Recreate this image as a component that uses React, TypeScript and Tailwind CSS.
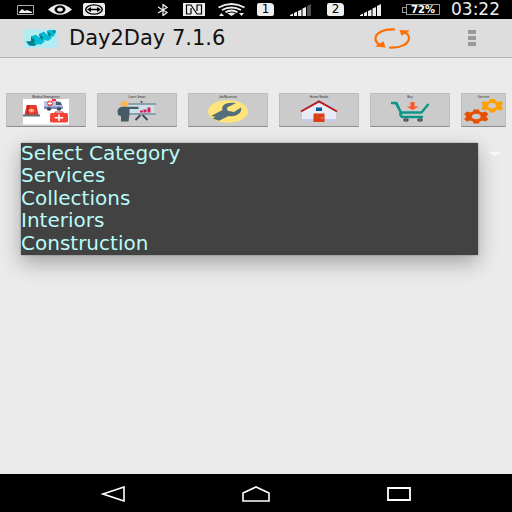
import type { ReactNode } from 'react';
import { clsx } from 'clsx';

const categories = ['Select Category', 'Services', 'Collections', 'Interiors', 'Construction'];

interface TileProps {
  label: string;
  children: ReactNode;
}

function Tile({ label, children }: TileProps) {
  return (
    <button
      type="button"
      className="flex h-[34px] min-w-0 flex-col items-center overflow-hidden border border-[#bdbdbd] border-b-[#8c8c8c] bg-[#cbcbcb] pt-[2px]"
    >
      <span className="h-[3px] text-[3px] leading-[3px] whitespace-nowrap text-[#222]">{label}</span>
      {children}
    </button>
  );
}

function EmergencyIcon() {
  return (
    <svg width="46" height="27" viewBox="0 0 46 27" className="shrink-0" aria-hidden="true">
      <path d="M0 0h46v25.500H0z" fill="#fff" />
      <path d="M3.500 6h10l2 10h-14z" fill="#e83a2c" />
      <path d="M4.500 6h2l-1 10h-2z" fill="#b92722" />
      <ellipse cx="8.500" cy="11.500" rx="3" ry="2" fill="#ff8a65" />
      <circle cx="8.500" cy="11.500" r="1" fill="#ffe0b2" />
      <path d="M0 15.500h17v2H0z" fill="#607078" />
      <path d="M21 2h13l5 3 1 4v1H21z" fill="#bcc5e8" />
      <path d="M33 2.500l4.500.5 1.500 3h-6z" fill="#455a74" />
      <path d="M21 7.500h19V10H21z" fill="#7d88bd" />
      <path d="M29 0h4v2h-4z" fill="#f33" />
      <circle cx="27" cy="4.300" r="2.800" fill="#f44336" />
      <path d="M26.400 2.500h1.200v1.200h1.500v1.200h-1.500v1.200h-1.200V4.900h-1.500V3.700h1.500z" fill="#fff" />
      <ellipse cx="26" cy="10" rx="2.200" ry="1.700" fill="#37474f" />
      <ellipse cx="36" cy="10" rx="2.200" ry="1.700" fill="#37474f" />
      <path d="M32 14.500V13h8v1.500" fill="none" stroke="#d32f2f" />
      <rect x="27" y="14" width="18" height="9.500" rx="1.500" fill="#f44336" />
      <path d="M35.200 15.500h1.600V18h3.400v1.500h-3.400V22h-1.600v-2.500h-3.400V18h3.400z" fill="#fff" />
    </svg>
  );
}

function LearnIcon() {
  return (
    <svg width="40" height="21" viewBox="0 0 40 21" className="mt-[2px] shrink-0" aria-hidden="true">
      <path d="M10 3h27v10H10z" fill="#cfdfe8" />
      <path d="M10 2h29v2H10zM12 12h27v2H12z" fill="#8ba1ae" />
      <circle cx="24.500" cy="1" r="1" fill="#37474f" />
      <path d="M23.500 14l-5 5M25.500 14l5 5" stroke="#37474f" strokeWidth="1.800" />
      <path d="M23 9.500h3v2h-3zM26.500 8.500h3v3h-3zM30.500 6.500h3v5h-3z" fill="#d81b60" />
      <ellipse cx="7.500" cy="3" rx="4" ry="2.700" fill="#ffb74d" />
      <path d="M5 5.700h16.500v2.200H12.500V13l-1 7.500H4V15L1 14l-.5-4Q1 6.500 5 5.700z" fill="#455a64" />
    </svg>
  );
}

function WrenchIcon() {
  return (
    <svg width="40" height="23" viewBox="0 0 40 23" className="mt-[1px] shrink-0" aria-hidden="true">
      <ellipse cx="20" cy="11.500" rx="20" ry="11.300" fill="#ffe47a" />
      <path
        d="M28 3C19 1.500 12.500 5 14.500 10L3 16l4.500.7-3 1.800 6.500 2.300L20.500 16C29 17.200 34.500 12.500 33 7.500L26 12l-6.500-1.300-.5-3.200z"
        fill="#546e7a"
      />
    </svg>
  );
}

function HouseIcon() {
  return (
    <svg width="38" height="23" viewBox="0 0 38 23" className="mt-[1px] shrink-0" aria-hidden="true">
      <path d="M29 3h4v7h-4z" fill="#c5cae9" />
      <path d="M2 11L19 2l17 9v9H2z" fill="#e8eaf6" />
      <path d="M2 19h34v2.500H2z" fill="#c5cae9" />
      <path d="M1 11.500L19 1.500l18 10" fill="none" stroke="#b7191c" strokeWidth="2" />
      <path d="M16 7.500h6v3.500h-6z" fill="#01579b" />
      <path d="M13.500 13.500h11V22h-11z" fill="#db3f14" />
      <circle cx="22" cy="18" r=".8" fill="#ffab91" />
    </svg>
  );
}

function CartIcon() {
  return (
    <svg width="39" height="21" viewBox="0 0 39 21" className="mt-[2px] shrink-0" aria-hidden="true">
      <path d="M19.500 1h4v4.500h4.500L21.500 9 15.500 5.500h4z" fill="#ff5722" />
      <path
        d="M0 2h5.500l4.500 9.500M10 11.500h20.500L37.500 3M9 11.500q.5 4.500 3 4.500h20"
        fill="none"
        stroke="#0b9688"
        strokeWidth="2.300"
        strokeLinejoin="round"
      />
      <path d="M3.500 2h3l5 12-2-1z" fill="#0b9688" />
      <ellipse cx="15" cy="19" rx="2.800" ry="1.800" fill="#37474f" />
      <ellipse cx="29" cy="19" rx="2.800" ry="1.800" fill="#37474f" />
      <circle cx="15" cy="19" r=".7" fill="#b0bec5" />
      <circle cx="29" cy="19" r=".7" fill="#b0bec5" />
    </svg>
  );
}

function GearShape({ className }: { className: string }) {
  return (
    <path
      className={className}
      fillRule="evenodd"
      d="M9 0h6l.6 2.200 3 1L22 2.200l3 2.800-2 1.600v1.800l2 1.600-3 2.800-3.400-1-3 1L15 15H9l-.6-2.200-3-1-3.400 1L-1 10l2-1.600V6.600L-1 5l3-2.800 3.400 1 3-1zM12 4.500a4.800 3 0 1 0 .01 0z"
    />
  );
}

function GearsIcon() {
  return (
    <svg width="40" height="25" viewBox="0 0 40 25" className="shrink-0" aria-hidden="true">
      <g transform="translate(18 0) scale(.85 .9)">
        <GearShape className="fill-[#ffa000]" />
      </g>
      <g transform="translate(1 10.500) scale(.94 .94)">
        <GearShape className="fill-[#e65100]" />
      </g>
    </svg>
  );
}

function SimIcon({ slot }: { slot: string }) {
  return (
    <span className="flex h-[13px] w-[17px] items-center justify-center rounded-[2px] rounded-tr-[4px] bg-[#eee] font-['DejaVu_Sans'] text-[12px] leading-[13px] text-black">
      {slot}
    </span>
  );
}

function SignalIcon({ full }: { full?: boolean }) {
  return (
    <svg width="21" height="12" viewBox="0 0 21 12" aria-hidden="true">
      <path d="M0 12v-1l3-1.500V12zM4 12V9l3-1.500V12zM8 12V7l3.500-1.500V12zM12.500 12V4.500L16 3v9z" fill="#eee" />
      <path d="M17 12V2l4-2v12z" className={clsx(full ? 'fill-[#eee]' : 'fill-[#505050]')} />
    </svg>
  );
}

function StatusBar() {
  return (
    <div className="flex h-[19px] items-center bg-black pr-[12px] pl-[17px] text-[#eee]">
      <svg width="17" height="10" viewBox="0 0 17 10" aria-hidden="true">
        <path d="M.5.5h16v9H.5z" fill="none" stroke="#aaa" />
        <path d="M2 8V7l3-3 3 2 2-1 5 2v1z" fill="#eee" />
      </svg>
      <svg width="24" height="11" viewBox="0 0 24 11" className="ml-[14px]" aria-hidden="true">
        <path d="M0 5.500Q12-5 24 5.500 12 16 0 5.500z" fill="#eee" />
        <ellipse cx="12" cy="5.500" rx="5.500" ry="4" fill="#000" />
        <ellipse cx="12" cy="5.500" rx="2.800" ry="2" fill="#eee" />
      </svg>
      <svg width="22" height="13" viewBox="0 0 22 13" className="ml-[11px]" aria-hidden="true">
        <rect width="22" height="13" rx="2" fill="#eee" />
        <ellipse cx="11" cy="6.500" rx="9" ry="5.200" fill="#000" />
        <ellipse cx="11" cy="6.500" rx="7.500" ry="4" fill="#eee" />
        <path d="M4 6.500l4-2.500v1.700h6V4l4 2.500L14 9V7.300H8V9z" fill="#000" />
      </svg>
      <div className="ml-auto flex items-center">
        <svg width="12" height="12" viewBox="0 0 12 12" aria-hidden="true">
          <path d="M1 3l9 5.500L6 11.500V.5l4 3L1 9" fill="none" stroke="#eee" strokeWidth="1.300" />
        </svg>
        <svg width="22" height="13" viewBox="0 0 22 13" className="ml-[14px]" aria-hidden="true">
          <path d="M0 0h22v13H0z" fill="#eee" />
          <path d="M8 11H3.500V2H8l6 9h4.500V2H14v6M8 11V5" fill="none" stroke="#000" strokeWidth="1.200" />
        </svg>
        <svg width="27" height="13" viewBox="0 0 27 13" className="ml-[13px]" aria-hidden="true">
          <g fill="none" stroke="#eee" strokeWidth="1.900">
            <path d="M.5 4.500q13-7 26 0" />
            <path d="M4 7q9.500-5 19 0" />
            <path d="M7.500 9.300q6-3.600 12 0" />
          </g>
          <path d="M9.500 10.500q4-2 8 0L13.500 13zM1 13l2.500-3L6 13zM21 10h5l-2.500 3z" fill="#eee" />
        </svg>
        <div className="ml-[12px] flex items-center gap-[16px]">
          <SimIcon slot="1" />
          <SignalIcon />
          <SimIcon slot="2" />
          <SignalIcon full />
        </div>
        <div className="ml-[21px] flex items-center">
          <span className="h-[6px] w-[4px] border border-r-0 border-[#999]" />
          <span className="flex h-[11px] w-[34px] items-center justify-center border border-[#999] font-['DejaVu_Sans'] text-[10px] leading-[11px] font-bold text-white">
            72%
          </span>
        </div>
        <span className="ml-[11px] font-['DejaVu_Sans'] text-[17px] leading-[19px]">03:22</span>
      </div>
    </div>
  );
}

function AppHeader() {
  return (
    <header className="flex h-[39px] items-center border-b border-[#b5b5b5] bg-[#ddd] pr-[36px] pl-[24px]">
      <svg width="34" height="19" viewBox="0 0 34 19" aria-hidden="true">
        <path d="M0 0h34v19H0z" fill="#b2ebf2" />
        <path d="M2 12.500l6-.5 5 3.500-3 1.500-5-.5zM7 7.500L12 6l2 5-4 1zM15 5l5-2 3 5-4 1zM23 2l5-1 1 4-3 1z" fill="#00838f" />
        <path d="M12 6l9 6-4 3.500-7-.5-3-7.500zM20 3l8 6-4 3-7-2-2-5zM28 1l3 1.500-1 5-5 .5-2-6z" fill="#00bcd4" />
        <path d="M7 7.500l4 3.500-1 4-3-3zM15 5l4 3v3l-3-2zM23 2l4 3-1 3-2-2zM28 1l4 .5-1 4z" fill="#00838f" />
      </svg>
      <h1 className="ml-[11px] font-['DejaVu_Sans'] text-[21px] leading-[24px] text-[#111]">Day2Day 7.1.6</h1>
      <button type="button" aria-label="Refresh" className="ml-auto">
        <svg width="37" height="21" viewBox="0 0 37 21" aria-hidden="true">
          <g fill="none" stroke="#ff6f00" strokeWidth="2.200">
            <path d="M21 1.500C10 .5 1.500 5 1.500 10.500q0 4 4.500 6.500" />
            <path d="M15 19.500c11 1 20-3.500 20-9.500q0-3.500-4.500-6" />
          </g>
          <path d="M1 18.500l8.500-5.300 2 6.300zM25.500 2L36 2.500l-8.500 5.300z" fill="#ff6f00" />
        </svg>
      </button>
      <button type="button" aria-label="More options" className="ml-[57px] flex flex-col gap-[2px]">
        <span className="h-[4px] w-[8px] bg-[#999]" />
        <span className="h-[4px] w-[8px] bg-[#999]" />
        <span className="h-[4px] w-[8px] bg-[#999]" />
      </button>
    </header>
  );
}

function CategoryList() {
  return (
    <div className="mt-[16px] flex items-start pr-[10px] pl-[21px]">
      <ul
        role="listbox"
        aria-label="Category"
        className="grid h-28 flex-1 grid-rows-5 bg-[#424242] shadow-[0_8px_20px_rgba(0,0,0,0.3),0_0_2px_rgba(0,0,0,0.3)]"
      >
        {categories.map((name) => (
          <li key={name} role="option" aria-selected={false} className="flex items-start">
            <button
              type="button"
              className="flex-1 text-left font-['DejaVu_Sans'] text-[20px] leading-[20px] text-[#b9fbf9]"
            >
              {name}
            </button>
          </li>
        ))}
      </ul>
      <button type="button" aria-label="Open category list" className="mt-[9px] ml-[10px]">
        <svg width="14" height="4" viewBox="0 0 14 4" aria-hidden="true">
          <path d="M0 0h14L7 4z" fill="#f8f8f8" />
        </svg>
      </button>
    </div>
  );
}

function NavigationBar() {
  return (
    <nav className="flex h-[38px] items-center justify-between bg-black pt-[2px] pr-[101px] pl-[101px]">
      <button type="button" aria-label="Back">
        <svg width="24" height="16" viewBox="0 0 24 16" aria-hidden="true">
          <path d="M2 8l21-7v14z" fill="none" stroke="#fff" strokeWidth="1.600" />
        </svg>
      </button>
      <button type="button" aria-label="Home">
        <svg width="28" height="16" viewBox="0 0 28 16" aria-hidden="true">
          <path d="M1 15V7l13-6 13 6v8z" fill="none" stroke="#fff" strokeWidth="1.600" />
        </svg>
      </button>
      <button type="button" aria-label="Recent apps">
        <svg width="24" height="14" viewBox="0 0 24 14" aria-hidden="true">
          <path d="M1 1h22v12H1z" fill="none" stroke="#fff" strokeWidth="1.800" />
        </svg>
      </button>
    </nav>
  );
}

export default function App() {
  return (
    <div className="flex min-h-screen flex-col overflow-hidden bg-[#ebebeb]">
      <StatusBar />
      <AppHeader />
      <main className="flex-1 pt-[35px]">
        <div className="grid grid-cols-[repeat(5,16fr)_9fr] gap-[11px] px-[6px]">
          <Tile label="Medical Emergency">
            <EmergencyIcon />
          </Tile>
          <Tile label="Learn Smart">
            <LearnIcon />
          </Tile>
          <Tile label="Job/Business">
            <WrenchIcon />
          </Tile>
          <Tile label="Home Needs">
            <HouseIcon />
          </Tile>
          <Tile label="Buy">
            <CartIcon />
          </Tile>
          <Tile label="Services">
            <GearsIcon />
          </Tile>
        </div>
        <CategoryList />
      </main>
      <NavigationBar />
    </div>
  );
}
